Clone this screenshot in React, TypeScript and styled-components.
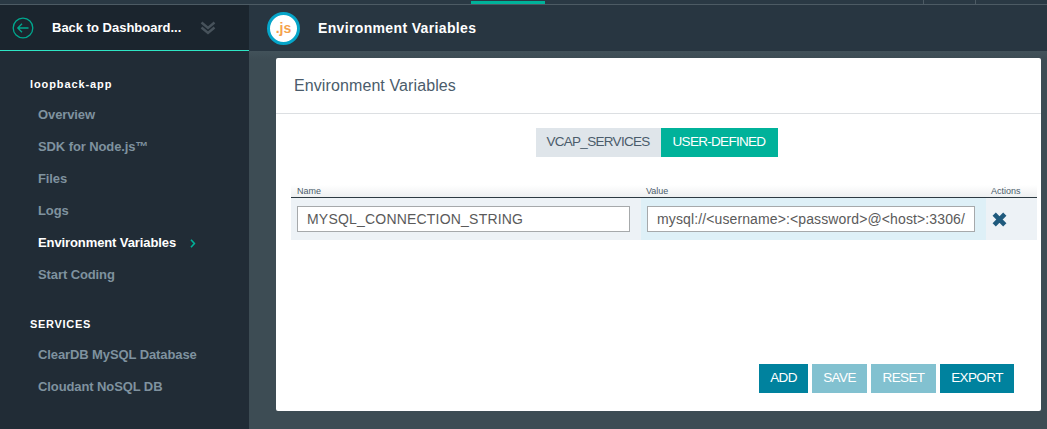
import { createGlobalStyle, styled } from "styled-components";

const Global = createGlobalStyle`
  html, body { margin: 0; padding: 0; background: #3d4c54; }
  body { font-family: "Liberation Sans", Arial, sans-serif; }
`;

const Page = styled.div`
  width: 1047px;
  height: 429px;
  display: flex;
  flex-direction: column;
  overflow: hidden;
`;

const TopStrip = styled.div`
  height: 4px;
  flex: none;
  display: flex;
  background: #2a3944;
  border-bottom: 1px solid #4d5b64;
`;

const StripActive = styled.div`
  width: 74px;
  height: 3px;
  margin: 1px 0 0 471px;
  background: #00b29a;
`;

const StripCell = styled.div<{ $w: number; $first?: boolean }>`
  width: ${(p) => p.$w}px;
  height: 4px;
  flex: none;
  margin-left: ${(p) => (p.$first ? "378px" : "0")};
  border-left: 1px solid #4d5b64;
  box-sizing: border-box;
`;

const Body = styled.div`
  flex: 1;
  display: flex;
  min-height: 0;
`;

const Sidebar = styled.aside`
  width: 249px;
  flex: none;
  background: #212c36;
  display: flex;
  flex-direction: column;
`;

const Back = styled.div`
  height: 45px;
  box-sizing: content-box;
  flex: none;
  display: flex;
  align-items: center;
  background: #1b252e;
  border-bottom: 1px solid #2ee6c5;
  padding-left: 12px;
`;

const BackLabel = styled.span`
  margin-left: 18px;
  width: 148px;
  color: #fff;
  font-size: 13px;
  font-weight: 700;
`;

const SideNav = styled.nav`
  display: flex;
  flex-direction: column;
  padding-top: 17px;
`;

const SectionLabel = styled.div<{ $spaced?: boolean }>`
  height: 31px;
  line-height: 32px;
  margin-top: ${(p) => (p.$spaced ? "17px" : "0")};
  padding-left: 30px;
  color: #fff;
  font-size: 11px;
  font-weight: 700;
  letter-spacing: ${(p) => (p.$spaced ? "0.7px" : "0.9px")};
`;

const NavItem = styled.div<{ $active?: boolean }>`
  height: 32px;
  line-height: 32px;
  padding-left: 38px;
  display: flex;
  align-items: center;
  color: ${(p) => (p.$active ? "#fff" : "#7f929f")};
  font-size: 13px;
  font-weight: 700;
  letter-spacing: -0.1px;
`;

const NavChevron = styled.svg`
  margin-left: 14px;
  margin-top: 1px;
`;

const Main = styled.main`
  flex: 1;
  display: flex;
  flex-direction: column;
  min-width: 0;
`;

const MainHeader = styled.header`
  height: 46px;
  flex: none;
  display: flex;
  align-items: center;
  padding-left: 18px;
  background: #283641;
`;

const Badge = styled.div`
  width: 33px;
  height: 33px;
  box-sizing: border-box;
  border-radius: 50%;
  background: #fff;
  border: 3px solid #06a5c9;
  color: #f5a14b;
  font-size: 14px;
  font-weight: 700;
  display: flex;
  align-items: center;
  justify-content: center;
`;

const MainTitle = styled.h1`
  margin: 0 0 0 18px;
  color: #fff;
  font-size: 14px;
  font-weight: 700;
  letter-spacing: 0.35px;
`;

const Content = styled.div`
  flex: 1;
  padding: 7px 6px 18px 27px;
  min-height: 0;
  display: flex;
  background: linear-gradient(#42525a, #3d4c54 8px);
`;

const Card = styled.section`
  flex: 1;
  background: #fff;
  border-radius: 2px;
  display: flex;
  flex-direction: column;
`;

const CardHeader = styled.div`
  height: 56px;
  flex: none;
  box-sizing: border-box;
  display: flex;
  align-items: center;
  padding-left: 18px;
  border-bottom: 1px solid #dcdfe2;
  color: #4b5c6b;
  font-size: 16px;
  letter-spacing: 0.1px;
`;

const Tabs = styled.div`
  margin-top: 14px;
  display: flex;
  justify-content: center;
  padding-right: 4px;
  flex: none;
`;

const Tab = styled.div<{ $active?: boolean; $w: number }>`
  width: ${(p) => p.$w}px;
  height: 29px;
  padding-bottom: 2px;
  box-sizing: border-box;
  display: flex;
  align-items: center;
  justify-content: center;
  font-size: 13.5px;
  letter-spacing: -0.7px;
  background: ${(p) => (p.$active ? "#00b29a" : "#dfe5ea")};
  color: ${(p) => (p.$active ? "#fff" : "#4b5c6b")};
`;

const Table = styled.div`
  margin: 28px 4px 0 15px;
  flex: none;
`;

const HeadRow = styled.div`
  display: grid;
  grid-template-columns: 350px 345px 51px;
  height: 12px;
  border-bottom: 1px solid #2d3a42;
  background: linear-gradient(#ffffff, #eef0f1);
`;

const HeadCell = styled.div<{ $indent: number }>`
  padding-left: ${(p) => p.$indent}px;
  color: #4b5c6b;
  font-size: 9px;
  line-height: 12px;
`;

const Row = styled.div`
  display: grid;
  grid-template-columns: 350px 345px 51px;
  height: 42px;
`;

const Cell = styled.div<{ $tint: string }>`
  display: flex;
  align-items: center;
  padding-left: 6px;
  background: ${(p) => p.$tint};
`;

const Field = styled.div<{ $w: number; $spacing: number }>`
  width: ${(p) => p.$w}px;
  height: 26px;
  box-sizing: border-box;
  display: flex;
  align-items: center;
  padding: 0 0 1px 9px;
  background: #fff;
  border: 1px solid #a6a9ab;
  color: #5a5a5a;
  font-size: 14px;
  white-space: nowrap;
  letter-spacing: ${(p) => p.$spacing}px;
`;

const Actions = styled.div`
  flex: 1;
  display: flex;
  justify-content: flex-end;
  gap: 4px;
  padding: 0 27px 18px 0;
  align-items: flex-end;
`;

const ActionButton = styled.div<{ $w: number; $disabled?: boolean }>`
  width: ${(p) => p.$w}px;
  height: 29px;
  padding-bottom: 3px;
  box-sizing: border-box;
  display: flex;
  align-items: center;
  justify-content: center;
  color: #fff;
  font-size: 13.5px;
  letter-spacing: -0.6px;
  background: ${(p) => (p.$disabled ? "#82c1d0" : "#00829e")};
`;

export default function App() {
  return (
    <Page>
      <Global />
      <TopStrip>
        <StripActive />
        <StripCell $w={52} $first />
        <StripCell $w={72} />
      </TopStrip>
      <Body>
        <Sidebar>
          <Back>
            <svg width="22" height="22" viewBox="0 0 22 22" fill="none" stroke="#00a88f">
              <circle cx="11" cy="11" r="9.8" strokeWidth="1.3" />
              <path d="M16.5 11H6M10 6.8 5.8 11l4.2 4.2" strokeWidth="1.3" />
            </svg>
            <BackLabel>Back to Dashboard...</BackLabel>
            <svg width="16" height="14" viewBox="0 0 16 14" fill="none" stroke="#47525b" strokeWidth="2.4">
              <path d="M1.5 1.5 8 7l6.5-5.5M1.5 6.5 8 12l6.5-5.5" />
            </svg>
          </Back>
          <SideNav>
            <SectionLabel>loopback-app</SectionLabel>
            <NavItem>Overview</NavItem>
            <NavItem>SDK for Node.js™</NavItem>
            <NavItem>Files</NavItem>
            <NavItem>Logs</NavItem>
            <NavItem $active>
              Environment Variables
              <NavChevron width="6" height="9" viewBox="0 0 6 9" fill="none" stroke="#00b29a" strokeWidth="1.6">
                <path d="M1 .8 4.4 4.5 1 8.2" />
              </NavChevron>
            </NavItem>
            <NavItem>Start Coding</NavItem>
            <SectionLabel $spaced>SERVICES</SectionLabel>
            <NavItem>ClearDB MySQL Database</NavItem>
            <NavItem>Cloudant NoSQL DB</NavItem>
          </SideNav>
        </Sidebar>
        <Main>
          <MainHeader>
            <Badge>.js</Badge>
            <MainTitle>Environment Variables</MainTitle>
          </MainHeader>
          <Content>
            <Card>
              <CardHeader>Environment Variables</CardHeader>
              <Tabs>
                <Tab $w={125}>VCAP_SERVICES</Tab>
                <Tab $w={117} $active>USER-DEFINED</Tab>
              </Tabs>
              <Table>
                <HeadRow>
                  <HeadCell $indent={6}>Name</HeadCell>
                  <HeadCell $indent={5}>Value</HeadCell>
                  <HeadCell $indent={5}>Actions</HeadCell>
                </HeadRow>
                <Row>
                  <Cell $tint="#edf2f6">
                    <Field $w={333} $spacing={0.2}>MYSQL_CONNECTION_STRING</Field>
                  </Cell>
                  <Cell $tint="#def0f7">
                    <Field $w={328} $spacing={0.12}>mysql://&lt;username&gt;:&lt;password&gt;@&lt;host&gt;:3306/</Field>
                  </Cell>
                  <Cell $tint="#edf2f6">
                    <svg width="15" height="15" viewBox="0 0 15 15" fill="none" stroke="#1f5a7d" strokeWidth="4.6">
                      <path d="M2.2 2.2 12.8 12.8M12.8 2.2 2.2 12.8" />
                    </svg>
                  </Cell>
                </Row>
              </Table>
              <Actions>
                <ActionButton $w={49}>ADD</ActionButton>
                <ActionButton $w={55} $disabled>SAVE</ActionButton>
                <ActionButton $w={65} $disabled>RESET</ActionButton>
                <ActionButton $w={74}>EXPORT</ActionButton>
              </Actions>
            </Card>
          </Content>
        </Main>
      </Body>
    </Page>
  );
}
